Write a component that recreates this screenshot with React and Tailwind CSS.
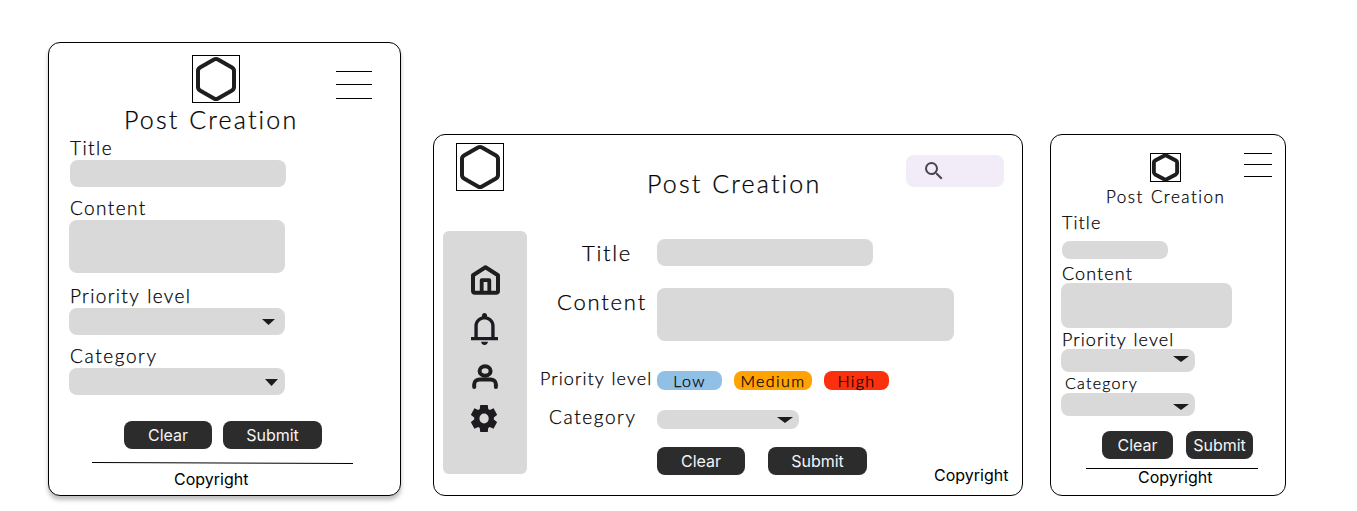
import React from "react";
import { MdSearch } from "react-icons/md";

const hand = "font-['Lato'] font-light whitespace-nowrap text-black [-webkit-text-stroke:0.25px_black] [word-spacing:1px]";
const inter = "font-['Inter'] text-[16px] whitespace-nowrap";

function Hexagon({ className, stroke }) {
  return (
    <div className={`border border-black shrink-0 ${className}`}>
      <svg viewBox="0 0 24 24" preserveAspectRatio="none" className="-m-px w-[calc(100%+2px)] h-[calc(100%+2px)] max-w-none block" fill="none" stroke="#1e1e1e" strokeWidth={stroke} strokeLinejoin="round">
        <path vectorEffect="non-scaling-stroke" d="M21 16V8a2 2 0 0 0-1-1.73l-7-4a2 2 0 0 0-2 0l-7 4A2 2 0 0 0 3 8v8a2 2 0 0 0 1 1.73l7 4a2 2 0 0 0 2 0l7-4A2 2 0 0 0 21 16z" />
      </svg>
    </div>
  );
}

function Text({ className, children }) {
  return <div className={`${hand} ${className}`}>{children}</div>;
}

function Field({ className }) {
  return <div className={`bg-[#d9d9d9] rounded-lg shrink-0 ${className}`} />;
}

function Select({ className, arrow }) {
  return (
    <div className={`bg-[#d9d9d9] rounded-lg shrink-0 flex justify-end items-start ${className}`}>
      <svg viewBox="0 0 10 5" preserveAspectRatio="none" className={arrow}>
        <path d="M0 0h10l-5 5z" fill="#1d1b20" />
      </svg>
    </div>
  );
}

function Button({ className, children }) {
  return (
    <button className={`${inter} h-7 rounded-lg bg-[#2c2c2c] text-[#f5f5f5] flex items-center justify-center ${className}`}>
      {children}
    </button>
  );
}

function Tablet() {
  return (
    <section className="mt-[42px] w-[353px] h-[454px] shrink-0 border border-black rounded-xl bg-white shadow-[0_4px_4px_rgba(0,0,0,0.25)] pt-3 flex flex-col">
      <header className="flex h-12 pl-[143px]">
        <Hexagon className="size-12" stroke={4} />
        <div className="ml-24 mt-4 w-9 h-7 flex flex-col">
          <div className="h-px bg-black" />
          <div className="h-px bg-black mt-3" />
          <div className="h-px bg-black mt-[13px]" />
        </div>
      </header>
      <Text className="h-8 leading-8 pl-[75px] text-[25px] tracking-[2.15px]">Post Creation</Text>
      <Text className="mt-[3px] h-[22px] leading-[20px] pl-[21px] text-[19px] tracking-[1.45px]">Title</Text>
      <Field className="ml-[21px] w-[216px] h-[27px]" />
      <Text className="mt-[10px] h-[23px] leading-[21px] pl-[21px] text-[19px] tracking-[1.4px]">Content</Text>
      <Field className="ml-5 w-[216px] h-[53px]" />
      <Text className="mt-3 h-[23px] leading-[22px] pl-[21px] text-[19px] tracking-[1.35px]">Priority level</Text>
      <Select className="ml-5 w-[216px] h-[27px]" arrow="w-[13px] h-[6px] mt-[11px] mr-[10px]" />
      <Text className="mt-[10px] h-[23px] leading-[21px] pl-[21px] text-[19px] tracking-[1.6px]">Category</Text>
      <Select className="ml-5 w-[216px] h-[27px]" arrow="w-[13px] h-[7px] mt-[11px] mr-[7px]" />
      <div className="mt-[26px] ml-[75px] flex gap-[11px]">
        <Button className="w-[88px]">Clear</Button>
        <Button className="w-[99px]">Submit</Button>
      </div>
      <svg className="mt-[13px] ml-[43px] w-[261px] h-[2px] shrink-0" viewBox="0 0 261 2">
        <path d="M0 .5L261 1.5" stroke="#000" />
      </svg>
      <div className={`${inter} h-[30px] leading-[30px] pl-[125px]`}>Copyright</div>
    </section>
  );
}

function Sidebar() {
  return (
    <nav className="w-[84px] h-[243px] shrink-0 rounded-md bg-[#d9d9d9] flex flex-col items-start pl-7">
      <svg className="mt-[34px] w-[29px] h-[30px] shrink-0" viewBox="0 0 29 30" fill="none" stroke="#1e1e1e" strokeWidth="4" strokeLinejoin="round">
        <path d="M2 10.3L14.5 2.3L27 10.3V25.7a2 2 0 0 1-2 2H4a2 2 0 0 1-2-2z" />
        <path strokeWidth="3.8" d="M10.7 27.5V15.2h7.6v12.3" />
      </svg>
      <svg className="mt-[18px] w-[27px] h-[32px] shrink-0" viewBox="4 2 16 20" preserveAspectRatio="none" fill="#1d1b20">
        <path d="M4 19v-2h2v-7c0-1.38.417-2.6 1.25-3.675C8.083 5.242 9.167 4.54 10.5 4.2v-.7c0-.417.146-.77.438-1.063A1.447 1.447 0 0 1 12 2c.417 0 .77.146 1.063.438.291.291.437.645.437 1.062v.7c1.333.342 2.417 1.046 3.25 2.125C17.583 7.4 18 8.62 18 10v7h2v2H4zm8 3a1.926 1.926 0 0 1-1.413-.587A1.926 1.926 0 0 1 10 20h4c0 .55-.196 1.02-.588 1.413A1.926 1.926 0 0 1 12 22zM8 17h8v-7c0-1.1-.392-2.042-1.175-2.825C14.042 6.392 13.1 6 12 6s-2.042.392-2.825 1.175S8 8.9 8 10v7z" />
      </svg>
      <svg className="mt-[19px] ml-px w-[26px] h-[25px] shrink-0" viewBox="0 0 26 25" fill="none" stroke="#1e1e1e" strokeWidth="4" strokeLinecap="round">
        <ellipse cx="13.1" cy="7" rx="5.5" ry="4.7" />
        <path d="M2.2 23v-2.8c0-3 2.5-4.7 5.5-4.7h10.8c3 0 5.4 1.7 5.4 4.7V23" />
      </svg>
      <svg className="mt-4 w-[26px] h-[27px] shrink-0" viewBox="2.2 2.4 19.6 19.2" preserveAspectRatio="none" fill="#1d1b20">
        <path d="M14.8 21.8H9.2l-.4-3.1q-.33-.12-.6-.3t-.57-.36L4.8 19.3 2.1 14.6l2.5-1.9v-1.35L2.1 9.4l2.7-4.7 2.85 1.2q.27-.2.56-.37t.59-.3l.4-3.1h5.6l.4 3.1q.32.13.6.3t.56.37l2.84-1.2 2.7 4.7-2.48 1.9v1.35l2.46 1.9-2.7 4.7-2.82-1.2q-.27.2-.56.36t-.6.3zM12.05 15.5a3.5 3.5 0 1 0 0-7 3.5 3.5 0 0 0 0 7z" fillRule="evenodd" />
      </svg>
    </nav>
  );
}

function Pill({ className, children }) {
  return (
    <div className={`${hand} h-[19px] leading-[19px] rounded-lg text-center text-[16px] tracking-[1.4px] ${className}`}>{children}</div>
  );
}

function Desktop() {
  return (
    <section className="ml-8 mt-[134px] w-[590px] h-[362px] shrink-0 border border-black rounded-xl bg-white pt-2 flex flex-col">
      <header className="flex h-[88px] pl-[22px]">
        <Hexagon className="size-12" stroke={4} />
        <Text className="mt-6 ml-[143px] w-[259px] h-8 leading-8 text-[25px] tracking-[2.15px]">Post Creation</Text>
        <div className="mt-3 w-[98px] h-8 rounded-lg bg-[#f2ecf8] flex items-center pl-4">
          <MdSearch className="size-6 text-[#49454f]" />
        </div>
      </header>
      <div className="flex pl-[9px]">
        <Sidebar />
        <div className="flex flex-col pt-2">
          <div className="flex h-[27px]">
            <Text className="w-[130px] pl-[55px] leading-[27px] text-[22px] tracking-[1.7px]">Title</Text>
            <Field className="w-[216px] h-[27px]" />
          </div>
          <div className="flex h-[53px] mt-[22px]">
            <Text className="w-[130px] pl-[30px] leading-[28px] text-[22px] tracking-[1.8px]">Content</Text>
            <Field className="w-[297px] h-[53px]" />
          </div>
          <div className="flex h-[19px] mt-[30px]">
            <Text className="w-[130px] pl-[13px] leading-[15px] text-[18px] tracking-[1.1px]">Priority level</Text>
            <Pill className="w-[65px] bg-[#90c0e6]">Low</Pill>
            <Pill className="w-[78px] ml-3 bg-[#ffa203]">Medium</Pill>
            <Pill className="w-[65px] ml-3 bg-[#fb300d]">High</Pill>
          </div>
          <div className="flex h-[19px] mt-5">
            <Text className="w-[130px] pl-[22px] leading-[14px] text-[19px] tracking-[1.6px]">Category</Text>
            <Select className="w-[142px] h-[19px]" arrow="w-[16px] h-[6px] mt-[7px] mr-[6px]" />
          </div>
          <div className="flex mt-[18px] pl-[130px]">
            <Button className="w-[88px]">Clear</Button>
            <Button className="w-[99px] ml-[23px]">Submit</Button>
            <div className={`${inter} mt-4 ml-[67px] h-6 leading-6`}>Copyright</div>
          </div>
        </div>
      </div>
    </section>
  );
}

function Mobile() {
  return (
    <section className="ml-[27px] mt-[134px] w-[236px] h-[362px] shrink-0 border border-black rounded-xl bg-white pt-[18px] flex flex-col">
      <header className="flex h-[29px] pl-[99px]">
        <Hexagon className="w-[31px] h-[29px]" stroke={3.9} />
        <div className="ml-[63px] w-7 flex flex-col">
          <div className="h-px bg-black" />
          <div className="h-px bg-black mt-[10px]" />
          <div className="h-px bg-black mt-[11px]" />
        </div>
      </header>
      <Text className="mt-[4px] h-[23px] leading-[22px] pl-[55px] text-[17px] tracking-[1.5px]">Post Creation</Text>
      <Text className="mt-[2px] h-[24px] leading-[22px] pl-[11px] text-[18px] tracking-[1.1px]">Title</Text>
      <Field className="mt-[6px] ml-[11px] w-[106px] h-[18px]" />
      <Text className="mt-[4px] h-[20px] leading-[20px] pl-[11px] text-[18px] tracking-[1.1px]">Content</Text>
      <Field className="ml-[10px] w-[171px] h-[45px]" />
      <Text className="mt-px h-5 leading-[20px] pl-[11px] text-[18px] tracking-[1.1px]">Priority level</Text>
      <Select className="ml-[10px] w-[134px] h-[23px]" arrow="w-[16px] h-[6px] mt-[7px] mr-[6px]" />
      <Text className="mt-px h-5 leading-5 pl-[14px] text-[16px] tracking-[1.25px]">Category</Text>
      <Select className="ml-[10px] w-[134px] h-[23px]" arrow="w-[16px] h-[6px] mt-[11px] mr-[6px]" />
      <div className="mt-[15px] ml-[51px] flex gap-[13px]">
        <Button className="w-[71px]">Clear</Button>
        <Button className="w-[67px]">Submit</Button>
      </div>
      <div className="mt-[9px] ml-[35px] w-[172px] h-px bg-black shrink-0" />
      <div className={`${inter} h-[18px] leading-[16px] pl-[87px]`}>Copyright</div>
    </section>
  );
}

export default function App() {
  return (
    <main className="w-[1357px] h-[511px] overflow-hidden bg-white flex items-start pl-12">
      <Tablet />
      <Desktop />
      <Mobile />
    </main>
  );
}
